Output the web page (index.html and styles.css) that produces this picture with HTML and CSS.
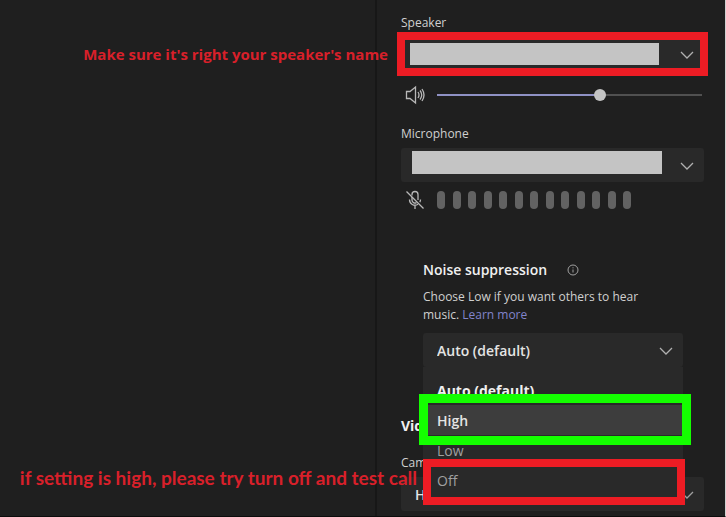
FILE: index.html
```html
<!DOCTYPE html>
<html lang="en">

<head>
    <meta charset="UTF-8">
    <meta name="viewport" content="width=device-width, initial-scale=1.0">
    <title>Device settings</title>
    <link rel="stylesheet" href="styles.css">
</head>

<body>

    <div class="settings">
        <div class="sidebar"></div>

        <main class="panel">
            <!-- Speaker -->
            <div class="field">
                <label for="speaker">Speaker</label>
                <div class="select-box">
                    <select id="speaker">
                        <option></option>
                    </select>
                    <svg class="chevron" viewBox="0 0 14 8"><path d="M1 1l6 6 6-6" /></svg>
                    <span class="redacted redacted-speaker"></span>
                    <span class="frame frame-speaker"></span>
                    <span class="note note-speaker">Make sure it's right your speaker's name</span>
                </div>
            </div>
            <div class="level-row">
                <svg class="icon" viewBox="0 0 20 20">
                    <path d="M1.500 6.500h3.500L10.500 2v16L5 13.500H1.500z" />
                    <path d="M13 7q2 3 0 6M15 5.500q3.500 4.500 0 9M17 4q4 6 0 12" />
                </svg>
                <input type="range" class="volume" min="0" max="100" value="62" aria-label="Speaker volume">
            </div>

            <!-- Microphone -->
            <div class="field">
                <label for="microphone">Microphone</label>
                <div class="select-box">
                    <select id="microphone">
                        <option></option>
                    </select>
                    <svg class="chevron" viewBox="0 0 14 8"><path d="M1 1l6 6 6-6" /></svg>
                    <span class="redacted redacted-mic"></span>
                </div>
            </div>
            <div class="level-row level-row-mic">
                <svg class="icon" viewBox="0 0 20 20">
                    <path d="M7 5.500V4.500a3 3 0 0 1 6 0V10M7 7v3a3 3 0 0 0 4.500 2.600" />
                    <path d="M4.500 9.500a5.500 5.500 0 0 0 8.500 4.800M15.500 9.500q0 1.500-.7 2.600M10 15.500V19" />
                    <path d="M1.500 1.500l17 17" />
                </svg>
                <div class="meter">
                    <i></i><i></i><i></i><i></i><i></i><i></i><i></i><i></i><i></i><i></i><i></i><i></i><i></i>
                </div>
            </div>

            <!-- Noise suppression -->
            <section class="noise">
                <h2>
                    <label for="noise">Noise suppression</label>
                    <svg class="info" viewBox="0 0 12 12">
                        <circle cx="6" cy="6" r="5" />
                        <path d="M6 5.500v3M6 3.300v1" />
                    </svg>
                </h2>
                <p>Choose Low if you want others to hear music. <a href="#">Learn more</a></p>
                <div class="select-box">
                    <select id="noise">
                        <option>Auto (default)</option>
                    </select>
                    <svg class="chevron" viewBox="0 0 14 8"><path d="M1 1l6 6 6-6" /></svg>
                    <div class="menu">
                        <button class="current">Auto (default)</button>
                        <button class="active">High<span class="frame frame-high"></span></button>
                        <button>Low</button>
                        <button>Off<span class="frame frame-off"></span></button>
                        <span class="note note-off">if setting is high, please try turn off and test call</span>
                    </div>
                </div>
            </section>

            <!-- Video -->
            <section class="video">
                <h2>Video</h2>
                <div class="field">
                    <label for="camera">Camera</label>
                    <div class="select-box">
                        <select id="camera">
                            <option>HD Camera</option>
                        </select>
                        <svg class="chevron" viewBox="0 0 14 8"><path d="M1 1l6 6 6-6" /></svg>
                    </div>
                </div>
            </section>
        </main>
    </div>

</body>

</html>
```
FILE: styles.css
```css
* {
    box-sizing: border-box;
}

body {
    margin: 0;
    background-color: #1f1f1f;
    color: #d0d0d0;
    font-family: "Open Sans", "Noto Sans", sans-serif;
    font-size: 12px;
    font-weight: 500;
    line-height: 18px;
}

.settings {
    display: grid;
    grid-template-columns: 1fr 348px;
    min-height: 100vh;
    border-right: 1px solid #d0d0d0;
    border-bottom: 1px solid #0c0c0c;
    overflow: hidden;
}

.sidebar {
    border-right: 2px solid #171717;
}

.panel {
    padding: 14px 21px 5px 24px;
}

/* Fields */
.field label {
    display: block;
    margin-bottom: 5px;
}

.select-box {
    position: relative;
}

.select-box select {
    display: block;
    width: 100%;
    height: 34px;
    padding: 0 36px 0 14px;
    border: none;
    border-radius: 3px;
    background-color: #292929;
    color: #e4e4e4;
    font: 600 14px "Open Sans", "Noto Sans", sans-serif;
    appearance: none;
}

.chevron {
    position: absolute;
    top: 14px;
    right: 10px;
    width: 14px;
    height: 8px;
    fill: none;
    stroke: #b0b0b0;
    stroke-width: 1.3;
}

.redacted {
    position: absolute;
    right: 42px;
    background-color: #c4c4c4;
}

.redacted-speaker {
    top: 6px;
    left: 9px;
    right: 45px;
    height: 22px;
}

.redacted-mic {
    top: 3px;
    left: 11px;
    height: 23px;
}

/* Volume and input level */
.level-row {
    display: flex;
    align-items: center;
    gap: 12px;
    height: 20px;
    margin: 14px 2px 20px 4px;
}

.level-row-mic {
    margin-top: 8px;
}

.icon {
    flex: none;
    width: 20px;
    height: 20px;
    fill: none;
    stroke: #b8b8b8;
    stroke-width: 1.3;
}

.volume {
    flex: 1;
    min-width: 0;
    height: 12px;
    margin: 0;
    background: linear-gradient(to right, #8f91c4 62%, #505050 62%) center / 100% 2px no-repeat;
    appearance: none;
}

.volume::-webkit-slider-thumb {
    width: 12px;
    height: 12px;
    border-radius: 50%;
    background-color: #c4c4c4;
    appearance: none;
}

.meter {
    display: flex;
    justify-content: space-between;
    width: 194px;
}

.meter i {
    width: 8px;
    height: 18px;
    border-radius: 4px;
    background-color: #626262;
}

/* Noise suppression */
.noise {
    margin: 50px 21px 0 22px;
}

h2 {
    display: flex;
    align-items: center;
    gap: 20px;
    margin: 0;
    color: #f0f0f0;
    font-size: 14px;
    font-weight: 600;
    line-height: 20px;
}

.info {
    width: 12px;
    height: 12px;
    fill: none;
    stroke: #a0a0a0;
}

.noise p {
    margin: 8px 0 9px;
    padding-right: 24px;
}

.noise a {
    color: #8284cc;
    text-decoration: none;
}

.menu {
    position: absolute;
    top: 100%;
    left: 0;
    right: 0;
    z-index: 1;
    padding: 8px 0 4px;
    background-color: #292929;
}

.menu button {
    position: relative;
    display: block;
    width: 100%;
    height: 30px;
    padding: 0 14px;
    border: none;
    background: none;
    color: #a0a0a0;
    font: 14px "Open Sans", "Noto Sans", sans-serif;
    text-align: left;
}

.menu .current {
    color: #f0f0f0;
    font-weight: 700;
}

.menu .active {
    background-color: #3d3d3d;
    color: #e4e4e4;
    font-weight: 600;
}

/* Video */
.video {
    margin-top: 49px;
}

.video h2 {
    font-weight: 700;
    margin-bottom: 18px;
}

.video .chevron {
    stroke: #a0a0a0;
}

/* Callouts */
.frame {
    position: absolute;
    border: 8px solid #ed1c24;
    pointer-events: none;
}

.frame-speaker {
    inset: -5px -4px;
}

.frame-high {
    inset: -11px -8px -10px -4px;
    border: 9px solid #14ff00;
}

.frame-off {
    inset: -6px -2px -10px 0;
}

.note {
    position: absolute;
    right: 100%;
    color: #d8202a;
    font-size: 15px;
    font-weight: 700;
    white-space: nowrap;
}

.note-speaker {
    top: 8px;
    margin-right: 13px;
}

.note-off {
    bottom: 12px;
    margin-right: 6px;
    font-family: Lato, sans-serif;
    font-size: 19px;
}
```
